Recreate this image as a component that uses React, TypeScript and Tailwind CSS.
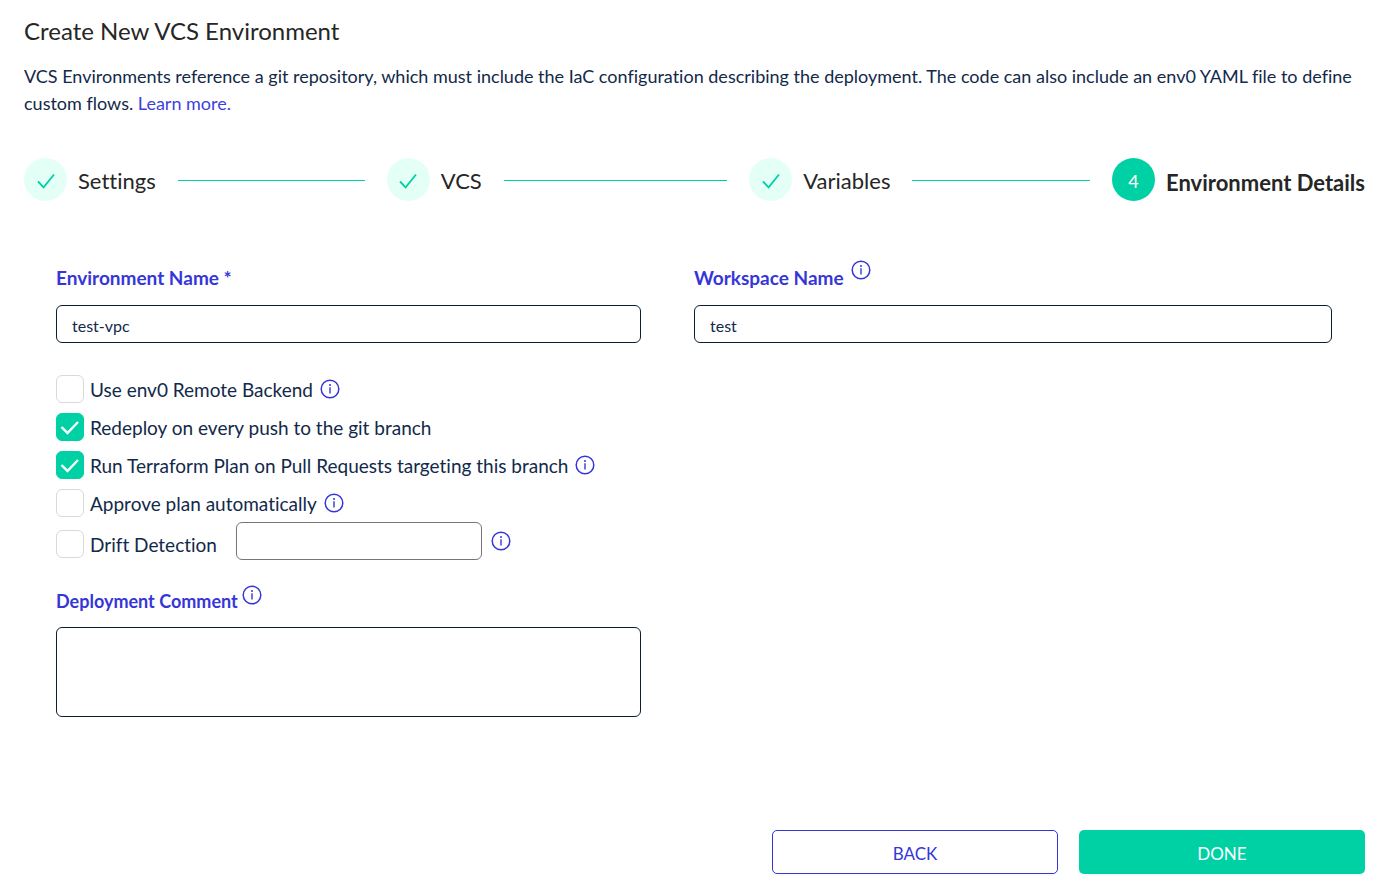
import { useState, type FormEvent, type ReactNode } from "react";

function InfoIcon({ className }: { className?: string }) {
  return (
    <svg
      viewBox="0 0 20 20"
      fill="none"
      role="img"
      aria-label="More info"
      className={`size-5 shrink-0 text-[#3636d8] ${className ?? ""}`}
    >
      <circle cx="10" cy="10" r="8.8" stroke="currentColor" strokeWidth="1.5" />
      <path d="M10 8.2v6.2" stroke="currentColor" strokeWidth="1.4" />
      <circle cx="10" cy="6" r="1" fill="currentColor" />
    </svg>
  );
}

function DoneStep({ title }: { title: string }) {
  return (
    <li className="flex flex-1 items-center">
      <span className="flex size-[43px] shrink-0 items-center justify-center rounded-full bg-[#e4fff6]">
        <svg viewBox="0 0 18 18" fill="none" className="mt-0.5 size-[18px]">
          <path d="M1 9.5l5.6 5.8L17 2.5" stroke="#00d1a4" strokeWidth="1.8" />
        </svg>
      </span>
      <span className="ml-[11px] pt-0.5 text-[22px] leading-7 text-[#262626]">{title}</span>
      <span className="mx-[22px] mt-0.5 h-px flex-1 bg-[#00d1a4]" />
    </li>
  );
}

type CheckRowProps = {
  label: string;
  defaultChecked?: boolean;
  info?: boolean;
  className?: string;
  children?: ReactNode;
};

function CheckRow({ label, defaultChecked, info, className, children }: CheckRowProps) {
  return (
    <div className="flex h-[38px] items-center">
      <label className={`flex items-center gap-1.5 ${className ?? ""}`}>
        <span className="grid">
          <input
            type="checkbox"
            defaultChecked={defaultChecked}
            className="peer col-start-1 row-start-1 size-7 appearance-none rounded-md border border-[#d9d9d9] bg-white checked:border-[#00d1a4] checked:bg-[#00d1a4]"
          />
          <svg
            viewBox="0 0 28 28"
            fill="none"
            className="pointer-events-none invisible col-start-1 row-start-1 size-7 peer-checked:visible"
          >
            <path d="M5.5 14l6 6L22 9" stroke="white" strokeWidth="2.4" />
          </svg>
        </span>
        <span className="pt-0.5 text-[19px] leading-6 text-[#12294a]">{label}</span>
      </label>
      {info && <InfoIcon className="ml-[7px]" />}
      {children}
    </div>
  );
}

function EnvironmentForm() {
  const [name, setName] = useState("test-vpc");
  const [workspace, setWorkspace] = useState("test");
  const [comment, setComment] = useState("");

  function handleSubmit(event: FormEvent<HTMLFormElement>) {
    event.preventDefault();
  }

  return (
    <form onSubmit={handleSubmit} className="mt-[57px]">
      <div className="pr-[33px] pl-8">
        <div className="grid grid-cols-2">
          <div className="pr-[53px]">
            <div className="flex h-[47px] pt-2">
              <label htmlFor="env-name" className="text-[19px] leading-6 font-bold text-[#3636d8]">
                Environment Name *
              </label>
            </div>
            <input
              id="env-name"
              value={name}
              onChange={(e) => setName(e.target.value)}
              className="h-[38px] w-full rounded-md border border-[#0b1f33] px-[15px] pt-0.5 text-[16px] text-[#12294a]"
            />
          </div>
          <div>
            <div className="flex h-[47px] gap-[7px] pt-2">
              <label htmlFor="workspace" className="text-[19px] leading-6 font-bold text-[#3636d8]">
                Workspace Name
              </label>
              <InfoIcon className="-mt-1.5" />
            </div>
            <input
              id="workspace"
              value={workspace}
              onChange={(e) => setWorkspace(e.target.value)}
              className="h-[38px] w-full rounded-md border border-[#0b1f33] px-[15px] pt-0.5 text-[16px] text-[#12294a]"
            />
          </div>
        </div>

        <div className="mt-[27px]">
          <CheckRow label="Use env0 Remote Backend" info />
          <CheckRow label="Redeploy on every push to the git branch" defaultChecked />
          <CheckRow
            label="Run Terraform Plan on Pull Requests targeting this branch"
            defaultChecked
            info
          />
          <CheckRow label="Approve plan automatically" info />
          <CheckRow label="Drift Detection" className="w-[180px] pt-1.5">
            <input
              aria-label="Drift detection schedule"
              className="h-[38px] w-[246px] rounded-md border border-[#767676] px-[15px] text-[16px]"
            />
            <InfoIcon className="ml-[9px]" />
          </CheckRow>
        </div>

        <div className="mt-[25px] w-1/2 pr-[53px]">
          <div className="flex h-[42px] gap-1 pt-1">
            <label htmlFor="comment" className="text-[18px] leading-6 font-bold text-[#3636d8]">
              Deployment Comment
            </label>
            <InfoIcon className="-mt-1" />
          </div>
          <textarea
            id="comment"
            value={comment}
            onChange={(e) => setComment(e.target.value)}
            className="block h-[90px] w-full resize-none rounded-md border border-[#0b1f33] px-[15px] py-2 text-[16px]"
          />
        </div>
      </div>

      <div className="mt-[113px] flex justify-end gap-[21px]">
        <button
          type="button"
          className="h-11 w-[286px] rounded-[5px] border border-[#3636d8] pt-1 text-[17px] text-[#3636d8] shadow-[0_2px_0_rgba(0,0,0,0.02)]"
        >
          BACK
        </button>
        <button
          type="submit"
          className="h-11 w-[286px] rounded-[5px] bg-[#00d1a4] pt-1 text-[17px] text-white shadow-[0_2px_0_rgba(0,0,0,0.02)]"
        >
          DONE
        </button>
      </div>
    </form>
  );
}

export default function App() {
  return (
    <main className="bg-white pt-[15px] pr-[29px] pb-4 pl-6 font-['Lato',sans-serif] [font-variant-ligatures:none]">
      <h1 className="text-[24px] leading-8 text-[#262626]">Create New VCS Environment</h1>
      <p className="mt-4 text-[18px] leading-[27px] text-[#12294a]">
        VCS Environments reference a git repository, which must include the IaC configuration
        describing the deployment. The code can also include an env0 YAML file to define custom
        flows.{" "}
        <a href="#" className="text-[#3f3fe0]">
          Learn more.
        </a>
      </p>

      <ol className="mt-[41px] flex">
        <DoneStep title="Settings" />
        <DoneStep title="VCS" />
        <DoneStep title="Variables" />
        <li className="flex items-center gap-[11px]" aria-current="step">
          <span className="flex size-[43px] shrink-0 items-center justify-center rounded-full bg-[#00d1a4] pt-1 text-[18px] text-white">
            4
          </span>
          <span className="pt-1.5 text-[22px] leading-7 font-bold text-[#262626]">
            Environment Details
          </span>
        </li>
      </ol>

      <EnvironmentForm />
    </main>
  );
}
